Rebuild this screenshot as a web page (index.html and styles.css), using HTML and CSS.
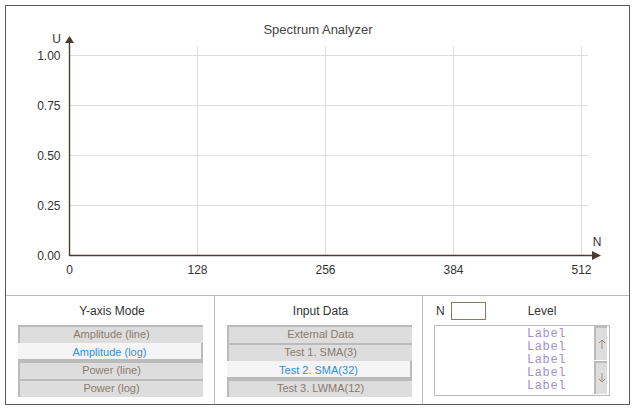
FILE: index.html
```html
<!DOCTYPE html>
<html>
<head>
<meta charset="utf-8">
<link rel="stylesheet" href="styles.css">
</head>
<body>
<div class="frame">
  <div class="chart">
    <svg width="623" height="289" viewBox="6 6 623 289" xmlns="http://www.w3.org/2000/svg">
      <g class="grid">
        <line x1="69" y1="55.5" x2="588" y2="55.5"/>
        <line x1="69" y1="105.5" x2="588" y2="105.5"/>
        <line x1="69" y1="155.5" x2="588" y2="155.5"/>
        <line x1="69" y1="205.5" x2="588" y2="205.5"/>
        <line x1="197.5" y1="46" x2="197.5" y2="255"/>
        <line x1="325.5" y1="46" x2="325.5" y2="255"/>
        <line x1="453.5" y1="46" x2="453.5" y2="255"/>
        <line x1="581.5" y1="46" x2="581.5" y2="255"/>
      </g>
      <g class="axis">
        <line x1="69.5" y1="42" x2="69.5" y2="256"/>
        <line x1="69" y1="255.5" x2="594" y2="255.5"/>
      </g>
      <polygon class="arrow" points="69.5,36 65,43 74,43"/>
      <polygon class="arrow" points="601,255.5 592,251 592,260"/>
      <text class="title" x="318" y="34" text-anchor="middle">Spectrum Analyzer</text>
      <text class="lbl" x="56.5" y="42.5" text-anchor="middle">U</text>
      <text class="lbl" x="597" y="245.5" text-anchor="middle">N</text>
      <g class="lbl" text-anchor="end">
        <text x="60.5" y="59.5">1.00</text>
        <text x="60.5" y="109.5">0.75</text>
        <text x="60.5" y="159.5">0.50</text>
        <text x="60.5" y="209.5">0.25</text>
        <text x="60.5" y="259.5">0.00</text>
      </g>
      <g class="lbl" text-anchor="middle">
        <text x="69.5" y="273.5">0</text>
        <text x="197.5" y="273.5">128</text>
        <text x="325.5" y="273.5">256</text>
        <text x="453.5" y="273.5">384</text>
        <text x="581.5" y="273.5">512</text>
      </g>
    </svg>
  </div>
  <div class="panels">
    <div class="panel">
      <div class="ptitle">Y-axis Mode</div>
      <div class="btns">
        <div class="btn">Amplitude (line)</div>
        <div class="btn sel">Amplitude (log)</div>
        <div class="btn">Power (line)</div>
        <div class="btn">Power (log)</div>
      </div>
    </div>
    <div class="panel sep">
      <div class="ptitle">Input Data</div>
      <div class="btns">
        <div class="btn">External Data</div>
        <div class="btn">Test 1. SMA(3)</div>
        <div class="btn sel">Test 2. SMA(32)</div>
        <div class="btn">Test 3. LWMA(12)</div>
      </div>
    </div>
    <div class="panel sep third">
      <div class="toprow">
        <span class="nlbl">N</span>
        <span class="nbox"></span>
        <span class="level">Level</span>
      </div>
      <div class="listbox">
        <div class="items">
          <div>Label</div>
          <div>Label</div>
          <div>Label</div>
          <div>Label</div>
          <div>Label</div>
        </div>
        <div class="scroll">
          <div class="sbtn">
            <svg width="8" height="10" viewBox="0 0 8 10"><path d="M4 1V10M0.8 4.2L4 1L7.2 4.2" fill="none" stroke="#a08c7c" stroke-width="1"/></svg>
          </div>
          <div class="sbtn">
            <svg width="8" height="10" viewBox="0 0 8 10"><path d="M4 0V9M0.8 5.8L4 9L7.2 5.8" fill="none" stroke="#a08c7c" stroke-width="1"/></svg>
          </div>
        </div>
      </div>
    </div>
  </div>
</div>
</body>
</html>
```
FILE: styles.css
```css
* { box-sizing: border-box; }
body {
  margin: 0;
  background: #fff;
  font-family: "Liberation Sans", Arial, sans-serif;
}
.frame {
  margin: 5px;
  width: 625px;
  height: 400px;
  border: 1px solid #5a5a5a;
  background: #fff;
}
.chart {
  height: 289px;
}
.chart svg { display: block; }
.grid line { stroke: #dddddd; stroke-width: 1; }
.axis line { stroke: #4a3b2b; stroke-width: 1.4; }
.arrow { fill: #4a3b2b; }
.title { font-size: 13px; fill: #444; font-family: "Liberation Sans", Arial, sans-serif; }
.lbl { font-size: 12px; fill: #333; font-family: "Liberation Sans", Arial, sans-serif; }
.panels {
  border-top: 1px solid #bbbbbb;
  height: 109px;
  display: grid;
  grid-template-columns: 208px 208px 207px;
}
.panel {
  padding-top: 7px;
}
.panel.sep { border-left: 1px solid #bbbbbb; }
.ptitle {
  font-size: 12px;
  line-height: 16px;
  color: #333;
  text-align: center;
  padding-left: 4px;
}
.btns {
  margin-top: 6px;
  margin-left: 12px;
  width: 185px;
}
.btn {
  height: 18px;
  border-top: 2px solid #bbbbbb;
  border-left: 2px solid #bbbbbb;
  background: #dddddd;
  color: #8a7b6c;
  font-size: 11px;
  line-height: 15px;
  text-align: center;
}
.btn.sel {
  border: 0;
  border-right: 2px solid #bbbbbb;
  border-bottom: 2px solid #bbbbbb;
  background: #f5f5f5;
  color: #2e8fe0;
  line-height: 16px;
  padding-top: 1px;
}
.third { padding-top: 6px; }
.toprow {
  display: flex;
  align-items: center;
  height: 18px;
  padding-left: 13px;
  font-size: 12px;
  color: #333;
}
.nbox {
  width: 35px;
  height: 18px;
  border: 1px solid #8a7968;
  margin-left: 6px;
}
.level { margin-left: 42px; }
.listbox {
  margin-top: 5px;
  margin-left: 11px;
  width: 176px;
  height: 71px;
  border: 1px solid #bbbbbb;
  display: flex;
}
.items {
  flex: 1;
  padding-left: 92px;
  padding-top: 2px;
  font-family: "Liberation Mono", "Courier New", monospace;
  font-size: 12px;
  letter-spacing: 0.6px;
  line-height: 13px;
  color: #a38ed2;
}
.items div { height: 13px; }
.scroll {
  width: 13px;
  margin-right: 2px;
  display: flex;
  flex-direction: column;
}
.sbtn {
  height: 34px;
  border-top: 2px solid #bbbbbb;
  border-left: 2px solid #bbbbbb;
  background: #dddddd;
  display: flex;
  align-items: center;
  justify-content: center;
  margin-bottom: 1px;
}
.sbtn svg { display: block; }
```
